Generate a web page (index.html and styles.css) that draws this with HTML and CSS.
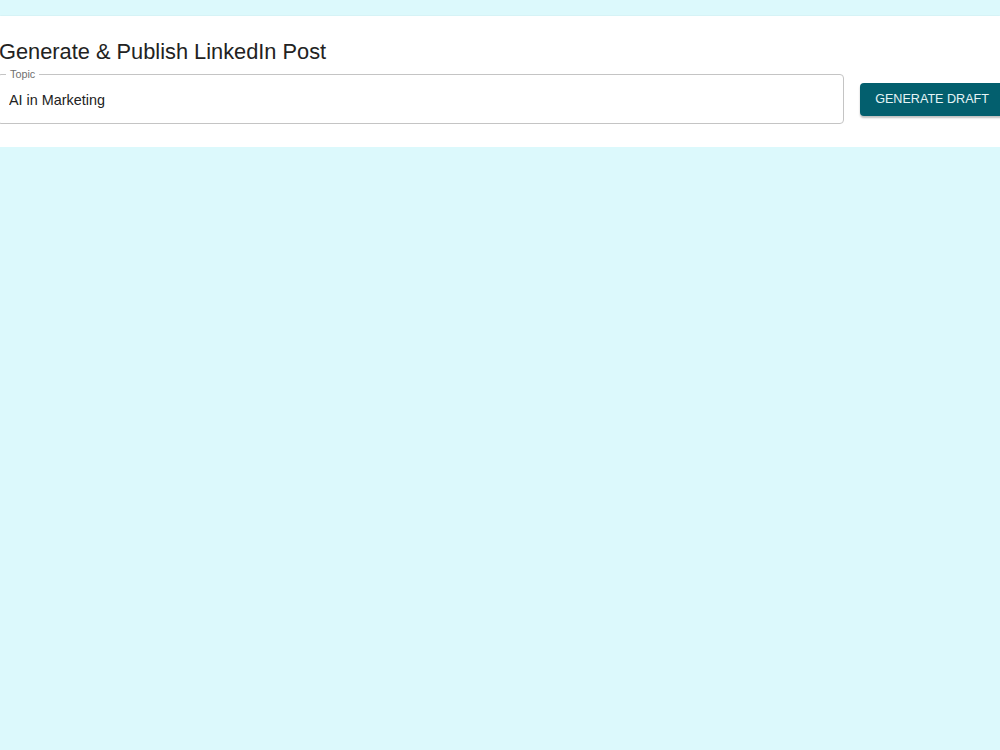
FILE: index.html
```html
<!DOCTYPE html>
<html lang="en">
<head>
  <meta charset="UTF-8" />
  <title>Generate & Publish LinkedIn Post</title>
  <link rel="stylesheet" href="styles.css">
</head>
<body>

  <div class="card">
    <h2 class="title">Generate &amp; Publish LinkedIn Post</h2>
    <form id="draftForm" class="row">
      <div class="field">
        <label for="topic">Topic</label>
        <input type="text" id="topic" name="topic" value="AI in Marketing" />
      </div>
      <button type="submit" class="btn">Generate Draft</button>
    </form>
  </div>

</body>
</html>
```

FILE: styles.css
```css
body { margin: 0; padding-top: 16px; background: #dcf9fc; font-family: "Liberation Sans", Arial, sans-serif; color: #222; overflow: hidden; }
.card { background: #fff; height: 131px; box-shadow: 0 1px 2px rgba(0, 0, 0, 0.35); padding-top: 23px; box-sizing: border-box; }
.title { margin: 0 0 9px -1px; font-size: 21.8px; font-weight: normal; line-height: 26px; color: #222; }
.row { display: flex; align-items: center; gap: 16px; margin-left: -3px; margin-right: -5px; }
.field { flex: 1; display: flex; align-items: center; padding: 2px 11px 0; height: 50px; box-sizing: border-box; border: 1px solid #c4c4c4; border-radius: 4px; position: relative; }
.field label { position: absolute; top: -7px; left: 8px; padding: 0 4px; background: #fff; font-size: 10.8px; line-height: 13px; color: #707070; }
.field input { border: none; outline: none; font: 14.4px "Liberation Sans", Arial, sans-serif; color: #222; padding: 0; margin: 0; width: 100%; }
.btn { height: 33px; padding: 0 16px 0 15px; background: #035f6e; color: #e6f4f6; border: none; border-radius: 4px; text-transform: uppercase; font: 12.6px "Liberation Sans", Arial, sans-serif; box-shadow: 0 2px 2px rgba(0, 0, 0, 0.25); flex-shrink: 0; }
```
